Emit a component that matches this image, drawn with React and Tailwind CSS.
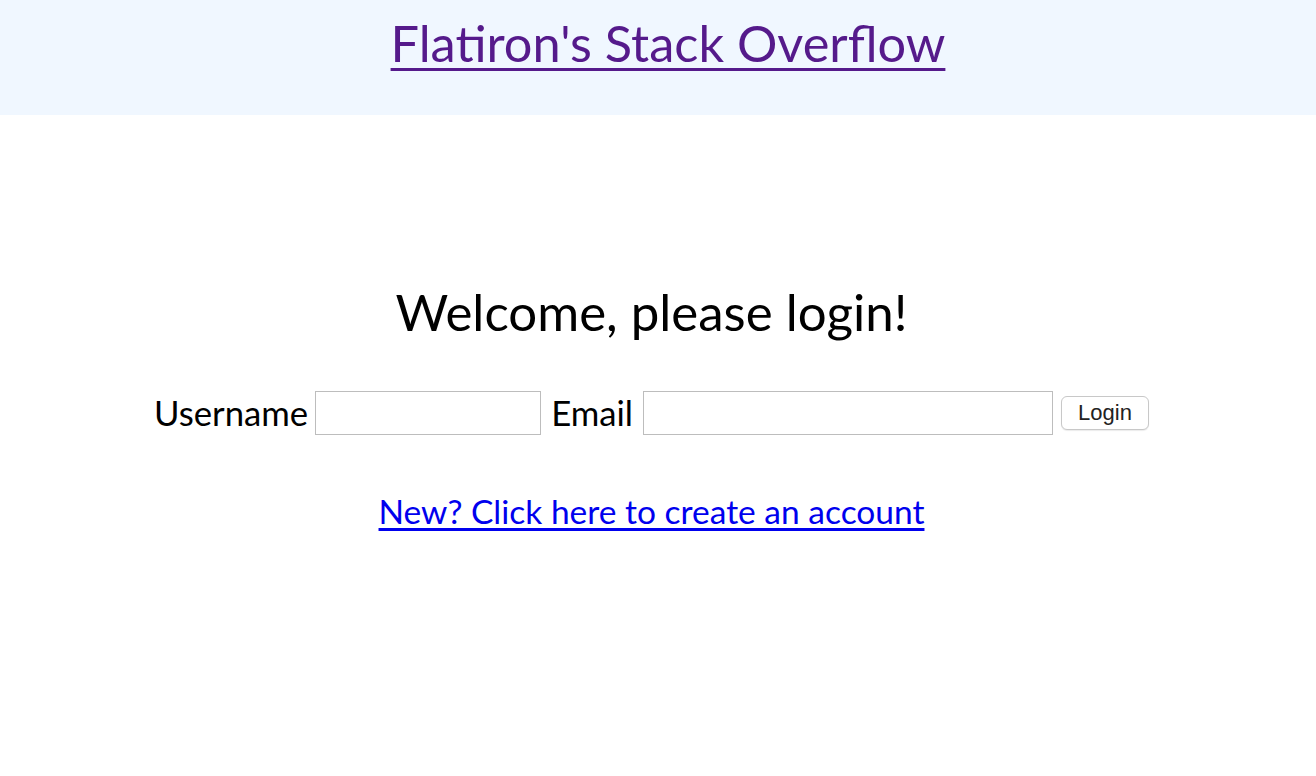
import React, { useState } from "react";

export default function App() {
  const [username, setUsername] = useState("");
  const [email, setEmail] = useState("");

  return (
    <div className="min-h-[776px] bg-white text-black font-['Lato',sans-serif]">
      {/* Header */}
      <header className="h-[115px] bg-[#f0f7ff] flex justify-center pt-[14px] pl-[20px]">
        <a href="#" className="text-[#551a8b] underline text-[50.5px] leading-[58px] underline-offset-[6px] decoration-[3px]">
          Flatiron's Stack Overflow
        </a>
      </header>

      <main className="flex flex-col items-center pr-[13px]">
        <h2 className="mt-[168px] text-[51px] leading-[58px]">Welcome, please login!</h2>

        <form
          className="mt-[50px] flex items-center"
          onSubmit={(e) => e.preventDefault()}
        >
          <label className="text-[34.7px] leading-[44px]">Username</label>
          <input
            type="text"
            value={username}
            onChange={(e) => setUsername(e.target.value)}
            className="ml-[7px] w-[226px] h-[44px] border border-[#bdbdbd] bg-white outline-none px-2"
          />
          <label className="ml-[10px] text-[34.7px] leading-[44px]">Email</label>
          <input
            type="email"
            value={email}
            onChange={(e) => setEmail(e.target.value)}
            className="ml-[10px] w-[410px] h-[44px] border border-[#bdbdbd] bg-white outline-none px-2"
          />
          <button
            type="submit"
            className="ml-[8px] w-[88px] h-[34px] border border-[#c8c8c8] rounded-[6px] bg-white shadow-[0_1px_1px_rgba(0,0,0,0.08)] text-[22px] leading-[28px] text-[#222] font-['Liberation_Sans',sans-serif]"
          >
            Login
          </button>
        </form>

        <a href="#" className="mt-[56px] text-[#0000ee] underline text-[33.5px] leading-[40px] underline-offset-[4px]">
          New? Click here to create an account
        </a>
      </main>
    </div>
  );
}
